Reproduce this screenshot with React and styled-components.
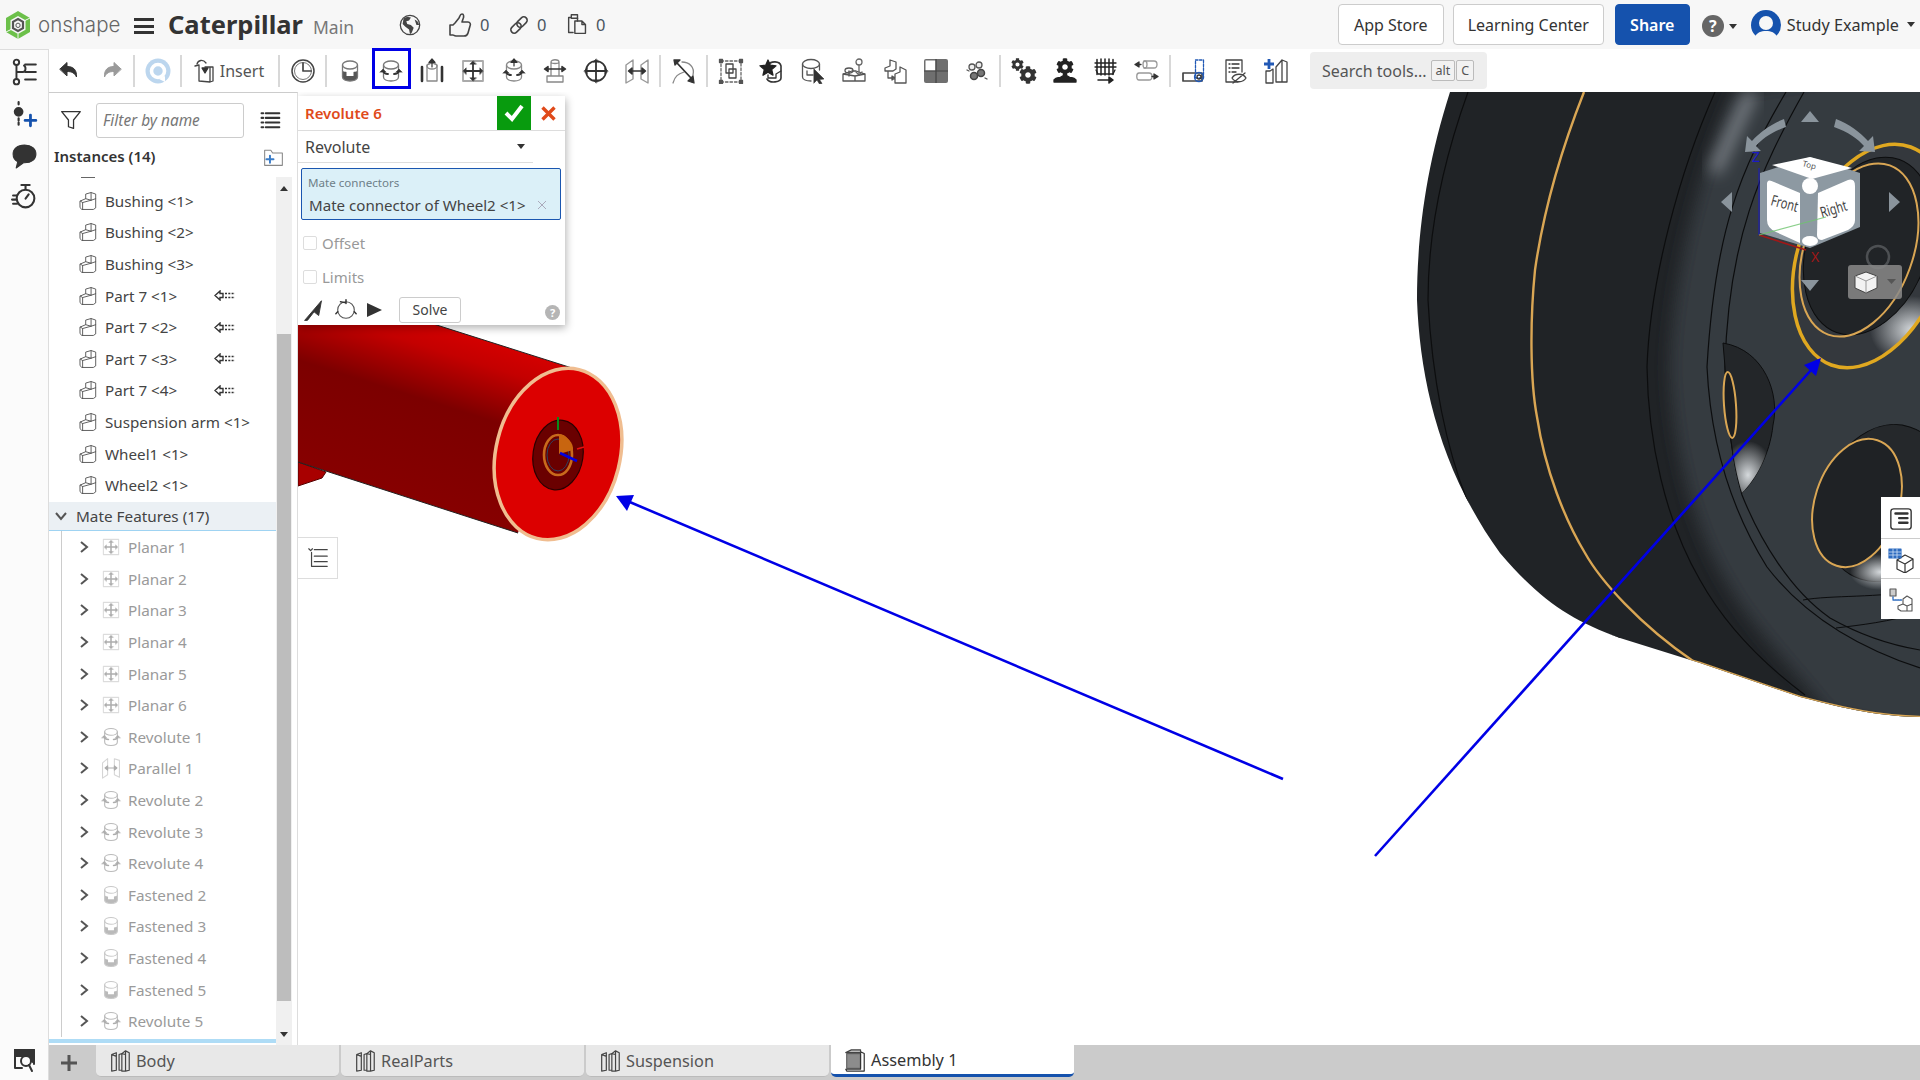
import React from 'react'
import styled, { createGlobalStyle } from 'styled-components'
import { FaCog } from 'react-icons/fa'

const GlobalStyle = createGlobalStyle`
  html, body { margin: 0; padding: 0; height: 100%; overflow: hidden; background: #fff; }
  #root { height: 100%; }
  * { box-sizing: border-box; }
  body { font-family: "Noto Sans", "Liberation Sans", sans-serif; color: #333; }
`

const Page = styled.div`
  width: 1920px;
  height: 1080px;
  display: flex;
  flex-direction: column;
  overflow: hidden;
`
const TopBar = styled.header`
  height: 49px;
  flex: none;
  background: #f7f7f7;
  display: flex;
  align-items: center;
  padding-left: 5px;
`
const Wordmark = styled.span`
  font-family: "Inter", sans-serif;
  font-size: 20.5px;
  font-weight: 300;
  color: #666;
  margin-left: 7px;
  width: 86px;
`
const Burger = styled.span`
  width: 20px;
  height: 16px;
  margin: 3px 14px 0 10px;
  border-top: 3px solid #333;
  border-bottom: 3px solid #333;
  position: relative;
  &::after {
    content: '';
    position: absolute;
    left: 0;
    right: 0;
    top: 3.5px;
    height: 3px;
    background: #333;
  }
`
const DocTitle = styled.span`
  font-size: 25.5px;
  font-weight: 700;
  color: #333;
  margin-top: -2px;
`
const Branch = styled.span`
  font-size: 17.5px;
  color: #777;
  margin: 5px 0 0 10px;
  width: 85px;
`
const Stat = styled.span`
  display: flex;
  align-items: center;
  gap: 7px;
  width: ${(p) => p.$w}px;
  font-size: 16.5px;
  color: #4a5560;
`
const TopRight = styled.div`
  margin-left: auto;
  display: flex;
  align-items: center;
  height: 100%;
`
const TopButton = styled.button`
  height: 41px;
  width: ${(p) => p.$w}px;
  margin-right: ${(p) => p.$mr}px;
  font: 16px "Noto Sans", sans-serif;
  color: ${(p) => (p.$primary ? '#fff' : '#333')};
  background: ${(p) => (p.$primary ? '#1552ad' : '#fff')};
  border: 1px solid ${(p) => (p.$primary ? '#1552ad' : '#ccc')};
  border-radius: 4px;
  font-weight: ${(p) => (p.$primary ? 600 : 400)};
  padding: 0;
`
const Caret = styled.span`
  display: inline-block;
  width: 0;
  height: 0;
  border-left: 4.5px solid transparent;
  border-right: 4.5px solid transparent;
  border-top: 5px solid ${(p) => p.$color || '#333'};
  margin: ${(p) => p.$m || '0'};
`
const HelpDot = styled.span`
  width: 22px;
  height: 22px;
  border-radius: 50%;
  background: #666;
  color: #fff;
  font-size: 16px;
  font-weight: 700;
  display: flex;
  align-items: center;
  justify-content: center;
  margin: 3px 0 0 12px;
`
const HelpGap = styled.span`
  width: 14px;
`
const UserName = styled.span`
  font-size: 16.2px;
  color: #333;
  margin-left: 6px;
`
const Shell = styled.div`
  flex: 1;
  display: flex;
  min-height: 0;
`
const Rail = styled.nav`
  width: 49px;
  flex: none;
  background: #fbfbfb;
  border-top: 1px solid #ddd;
  border-right: 1px solid #ddd;
  display: flex;
  flex-direction: column;
  align-items: center;
  padding-top: 8px;
  gap: 14px;
`
const RailFoot = styled.div`
  margin-top: auto;
  margin-bottom: 7px;
  line-height: 0;
`
const Content = styled.div`
  flex: 1;
  min-width: 0;
  display: flex;
  flex-direction: column;
`
const ToolBar = styled.div`
  height: 43px;
  flex: none;
  display: flex;
  align-items: center;
  background: #fff;
`
const ToolButton = styled.span`
  width: ${(p) => p.$w || 41}px;
  height: 100%;
  flex: none;
  display: flex;
  align-items: center;
  justify-content: center;
  gap: 3px;
  padding-right: ${(p) => p.$pr || 0}px;
  position: relative;
  font-size: 16px;
  color: #555;
  ${(p) =>
    p.$active &&
    `&::after {
      content: '';
      position: absolute;
      left: 2px;
      right: 0;
      top: -1px;
      bottom: 3px;
      border: 3px solid #0000e6;
    }`}
`
const ToolSep = styled.span`
  width: 2px;
  height: 32px;
  margin: 0 2px;
  background: #d8d8d8;
  flex: none;
`
const SearchBox = styled.div`
  width: 177px;
  height: 37px;
  margin-left: 14px;
  border-radius: 4px;
  background: #eee;
  display: flex;
  align-items: center;
  padding-left: 12px;
  font-size: 16px;
  color: #555;
`
const Key = styled.span`
  height: 21px;
  padding: 0 4px;
  margin-left: ${(p) => p.$ml || 0}px;
  border: 1px solid #bbb;
  border-radius: 2px;
  font-size: 12.5px;
  line-height: 19px;
  background: #f2f2f2;
`
const Middle = styled.div`
  flex: 1;
  min-height: 0;
  display: flex;
`
const SidePanel = styled.aside`
  width: 249px;
  flex: none;
  border-top: 1px solid #ccc;
  border-right: 1px solid #ddd;
  display: flex;
  flex-direction: column;
  background: #fff;
`
const FilterRow = styled.div`
  height: 54px;
  flex: none;
  display: flex;
  align-items: center;
  padding-left: 11px;
`
const FilterInput = styled.div`
  width: 148px;
  height: 35px;
  margin: 0 15px 0 14px;
  border: 1px solid #ccc;
  border-radius: 3px;
  font-size: 15.4px;
  font-style: italic;
  color: #777;
  padding-left: 6px;
  line-height: 33px;
`
const InstancesHead = styled.div`
  height: 30px;
  flex: none;
  display: flex;
  align-items: center;
  justify-content: space-between;
  padding: 0 12px 12px 5px;
  font-size: 15px;
  font-weight: 600;
  color: #333;
`
const TreeWrap = styled.div`
  flex: 1;
  min-height: 0;
  display: flex;
  overflow: hidden;
  position: relative;
`
const Tree = styled.div`
  width: 227px;
  flex: none;
  overflow: hidden;
  position: relative;
  padding-top: 8px;
`
const PeekRow = styled.span`
  position: absolute;
  left: 32px;
  top: 0;
  width: 14px;
  height: 1px;
  background: #666;
`
const ScrollTrack = styled.div`
  width: 16px;
  flex: none;
  margin-right: 5px;
  background: #f0f0f0;
  position: relative;
  display: flex;
  flex-direction: column;
  align-items: center;
`
const Thumb = styled.div`
  position: absolute;
  left: 1px;
  right: 1px;
  top: 157px;
  height: 667px;
  background: #bdbdbd;
`
const ArrowUp = styled.span`
  position: absolute;
  top: 9px;
  border-left: 4px solid transparent;
  border-right: 4px solid transparent;
  border-bottom: 5px solid #333;
`
const ArrowDown = styled.span`
  position: absolute;
  bottom: 8px;
  border-left: 4px solid transparent;
  border-right: 4px solid transparent;
  border-top: 5px solid #333;
`
const InstanceRow = styled.div`
  height: 31.6px;
  display: flex;
  align-items: center;
  padding-left: 29px;
  font-size: 15.2px;
  color: #444;
`
const RowLabel = styled.span`
  margin-left: 7px;
  width: ${(p) => p.$w || 'auto'};
`
const GroupHead = styled.div`
  height: 29.5px;
  margin-top: 1px;
  display: flex;
  align-items: center;
  padding-left: 6px;
  background: #ebf0f4;
  border-bottom: 1px solid #9fd3f2;
  font-size: 15.3px;
  color: #444;
  gap: 9px;
`
const FeatureList = styled.div`
  margin-left: 12px;
  border-left: 1px solid #ccc;
`
const FeatureRow = styled.div`
  height: 31.6px;
  display: flex;
  align-items: center;
  padding-left: 16px;
  font-size: 15.3px;
  color: #9a9a9a;
`
const FeatureIconSlot = styled.span`
  margin: 0 6px 0 10px;
  line-height: 0;
`
const TreeEnd = styled.div`
  position: absolute;
  left: 0;
  right: 0;
  bottom: 2px;
  height: 4px;
  background: #aedcf6;
`
const Viewport = styled.main`
  flex: 1;
  min-width: 0;
  position: relative;
  overflow: hidden;
  background: #fff;
`
const Scene = styled.svg`
  position: absolute;
  inset: 0;
  width: 100%;
  height: 100%;
  display: block;
`
const Dialog = styled.section`
  position: absolute;
  left: 0;
  top: 4px;
  width: 267px;
  height: 229px;
  background: #fff;
  box-shadow: 1px 3px 8px rgba(0, 0, 0, 0.3);
`
const DialogHead = styled.div`
  height: 35px;
  display: flex;
  align-items: center;
  border-bottom: 1px solid #ddd;
  padding-left: 7px;
`
const DialogTitle = styled.span`
  flex: 1;
  font-size: 15px;
  font-weight: 600;
  color: #e04a1a;
`
const OkBox = styled.span`
  width: 34px;
  height: 34px;
  background: #089b0e;
  display: flex;
  align-items: center;
  justify-content: center;
`
const CancelBox = styled.span`
  width: 34px;
  display: flex;
  justify-content: center;
`
const SelectRow = styled.div`
  width: 235px;
  height: 32px;
  display: flex;
  align-items: center;
  justify-content: space-between;
  border-bottom: 1px solid #ddd;
  padding: 0 8px 0 7px;
  font-size: 16px;
  color: #444;
`
const QueryBox = styled.div`
  margin: 5px 4px 0 3px;
  height: 52px;
  background: #dbf0f8;
  border: 1px solid #1a56b0;
  border-radius: 2px;
  padding: 6px 6px 0 7px;
`
const QueryLabel = styled.div`
  font-size: 11.6px;
  line-height: 16px;
  color: #6e7f88;
  margin-left: -1px;
`
const QueryValue = styled.div`
  font-size: 15.1px;
  line-height: 22px;
  margin-top: 3px;
  color: #444;
  display: flex;
  justify-content: space-between;
  padding-right: 7px;
`
const CheckRow = styled.div`
  height: 20px;
  margin: ${(p) => p.$mt}px 0 0 5px;
  display: flex;
  align-items: center;
  gap: 5px;
  font-size: 15px;
  color: #999;
`
const CheckBox = styled.span`
  width: 14px;
  height: 14px;
  border: 1px solid #ddd;
  border-radius: 2px;
  background: #fff;
`
const DialogFoot = styled.div`
  display: flex;
  align-items: center;
  margin-top: 10px;
  padding: 0 5px 0 5px;
  height: 25px;
  gap: 7px;
`
const SolveButton = styled.button`
  width: 62px;
  height: 26px;
  margin-left: 9px;
  background: #fff;
  border: 1px solid #ccc;
  border-radius: 3px;
  font: 14px "Noto Sans", sans-serif;
  color: #444;
  padding: 0;
`
const HelpSmall = styled.span`
  margin-left: auto;
  margin-top: 5px;
  width: 15px;
  height: 15px;
  border-radius: 50%;
  background: #b5b5b5;
  color: #fff;
  font-size: 11px;
  font-weight: 700;
  display: flex;
  align-items: center;
  justify-content: center;
`
const TreeToggle = styled.span`
  position: absolute;
  left: 0;
  top: 445px;
  width: 40px;
  height: 42px;
  background: #fff;
  border: 1px solid #ddd;
  border-left: 0;
  display: flex;
  align-items: center;
  justify-content: center;
`
const FlyoutTabs = styled.div`
  position: absolute;
  right: 0;
  top: 405px;
  width: 39px;
  background: #fff;
  display: flex;
  flex-direction: column;
`
const FlyoutTab = styled.span`
  height: 40.5px;
  padding-top: 3px;
  display: flex;
  align-items: center;
  justify-content: center;
  border-top: ${(p) => (p.$first ? 0 : '1px solid #ccc')};
`
const TabBar = styled.div`
  height: 35px;
  flex: none;
  background: #cbcbcb;
  display: flex;
`
const AddTab = styled.span`
  width: 47px;
  padding-right: 7px;
  display: flex;
  align-items: center;
  justify-content: center;
`
const Tab = styled.div`
  width: 243px;
  height: 32px;
  margin-right: 2px;
  padding-left: 12px;
  display: flex;
  align-items: center;
  gap: 4px;
  font-size: 16.3px;
  color: ${(p) => (p.$active ? '#333' : '#555')};
  background: ${(p) => (p.$active ? '#fff' : '#e8e8e8')};
  border-radius: 0 0 5px 5px;
  border-bottom: ${(p) => (p.$active ? '3px solid #1552ad' : '1px solid #bbb')};
`
const IconSvg = styled.svg`
  flex: none;
  display: block;
  fill: none;
  stroke: ${(p) => p.$c || '#444'};
  stroke-width: ${(p) => p.$sw || 1.3};
  stroke-linecap: round;
  stroke-linejoin: round;
  opacity: ${(p) => p.$o || 1};
`

const Icon = ({ s = 26, c, sw, o, children }) => (
  <IconSvg width={s} height={s} viewBox="0 0 26 26" $c={c} $sw={sw} $o={o}>
    {children}
  </IconSvg>
)

const DK = '#333'

// little four-way arrow used by several mate tools
const Cross = ({ x = 13, y = 13, r = 8, h = 2.6 }) => (
  <g stroke={DK} strokeWidth="1.8" fill={DK}>
    <path d={`M${x - r + 2} ${y}H${x + r - 2}M${x} ${y - r + 2}V${y + r - 2}`} />
    <path strokeWidth=".5" d={`M${x - r} ${y}l${h} -${h}v${2 * h}zM${x + r} ${y}l-${h} -${h}v${2 * h}zM${x} ${y - r}l-${h} ${h}h${2 * h}zM${x} ${y + r}l-${h} -${h}h${2 * h}z`} />
  </g>
)
const SideArrows = ({ y = 14 }) => (
  <g stroke={DK} strokeWidth="1.8" fill={DK}>
    <path fill="none" d={`M5 ${y}c1 3 3 3 5 3M21 ${y}c-1 3 -3 3 -5 3`} />
    <path strokeWidth=".5" d={`M2 ${y + 1}l3 -3l3 3zM24 ${y + 1}l-3 -3l-3 3z`} />
  </g>
)
const CylTop = ({ stroke = '#777' }) => (
  <g stroke={stroke}>
    <ellipse cx="13" cy="7" rx="7.5" ry="4" />
    <path d="M5.5 7v12c0 2.5 3.5 4 7.5 4s7.5 -1.5 7.5 -4V7" />
  </g>
)

const Logo = () => (
  <svg width="26" height="30" viewBox="0 0 26 30">
    <path d="M13 1l12 7v14L13 29 1 22V8z" fill="#6cc04a" />
    <path d="M13 6l7.500 4.300v9.400L13 24 5.500 19.700v-9.400z" fill="#f7f7f7" />
    <path d="M25 8l-5 2.500M1 22l5 -2.500M13 29v-5" stroke="#f7f7f7" strokeWidth="1" />
    <path d="M13 9l5 2.900v6.200L13 21l-5 -2.900v-6.200z" fill="none" stroke="#555" strokeWidth="2.200" />
    <path d="M13 13l2 1.200v2.300l-2 1.100-2 -1.100v-2.300z" fill="#f7f7f7" stroke="#555" strokeWidth="1" />
  </svg>
)
const Globe = () => (
  <Icon s={24} sw={1.4} c="#444">
    <circle cx="13" cy="13" r="10.500" />
    <path fill="#444" stroke="none" d="M6 6c3 -2 6 -2 8 -1l-2 3-3 1 1 3 4 1 3 3-2 5-2 2-1 -5-4 -3-3 -3zM18 7l3 2 2 4-3 0-1 -3z" />
  </Icon>
)
const Thumb2 = () => (
  <Icon s={26} sw={1.6} c="#444">
    <path d="M8 11l4 -5c1 -2 1 -4 3 -4s2 3 1 5l-1 3h6c2 0 3 2 2 4l-2 7c-.5 2 -2 3 -4 3H9c-2 0 -2 -1 -3 -1H3v-10h3z" />
  </Icon>
)
const LinkIco = () => (
  <Icon s={22} sw={1.9} c="#444">
    <g transform="rotate(-45 13 13)">
      <rect x="1" y="9" width="14" height="8" rx="4" />
      <rect x="11" y="9" width="14" height="8" rx="4" />
    </g>
  </Icon>
)
const Clip = () => (
  <Icon s={23} sw={1.6} c="#444">
    <path d="M8 22H3V5h3M6 2h7v4H6zM10 9h8l4 4v10H10zM18 9v4h4" />
    <path d="M13 6v3" />
  </Icon>
)
const Avatar = () => (
  <svg width="30" height="30" viewBox="0 0 30 30">
    <circle cx="15" cy="15" r="15" fill="#1552ad" />
    <circle cx="15" cy="13" r="7" fill="#f7f7f7" />
    <path d="M3 28c3 -6 7 -7 12 -7s9 1 12 7c-3 2 -8 2 -12 2s-9 0 -12 -2z" fill="#f7f7f7" />
  </svg>
)
const Part = ({ o, s = 20, c = '#555' }) => (
  <Icon s={s} c={c} sw={1.2} o={o}>
    <path d="M3 13l7 -3V4l7 -2 6 2v18l-3 2H5l-2 -2zM3 13l3 2v9M6 15l11 -3V2M17 12l6 -2M10 10l7 2" />
  </Icon>
)
const Revolute = ({ c = '#555', o }) => (
  <Icon s={22} sw={1.3} o={o}>
    <CylTop stroke={c} />
    <SideArrows y={13} />
  </Icon>
)
const Fastened = ({ o }) => (
  <Icon s={22} o={o}>
    <path d="M5.500 12v7c0 2.500 3.500 4 7.500 4s7.500 -1.500 7.500 -4v-7c0 3 -3 2 -4 3v3h-7v-3c-1 -1 -4 0 -4 -3z" fill="#555" stroke="none" />
    <CylTop />
  </Icon>
)
const Planar = ({ o }) => (
  <Icon s={22} o={o}>
    <rect x="4" y="4" width="18" height="18" stroke="#aaa" />
    <Cross />
  </Icon>
)
const Parallel = ({ o }) => (
  <Icon s={22} o={o}>
    <path d="M3 7l6 -5v19l-6 4zM23 4l-6 -2v19l6 3z" stroke="#999" />
    <path d="M7 13h12M9 10.500l-3 2.500 3 2.500zM17 10.500l3 2.500-3 2.500z" fill={DK} stroke={DK} />
  </Icon>
)
const PartTag = () => (
  <svg width="22" height="11" viewBox="0 0 22 11" fill="none" stroke="#333" strokeWidth="1.4">
    <path d="M6 1L1 5.500 6 10V7.500H9V3.500H6z" />
    <path strokeDasharray="2 1.300" d="M11 3.500h10M11 7.500h10" />
  </svg>
)
const DocIcon = () => (
  <Icon s={24} sw={1.3} c="#444">
    <path d="M4 6l5 -2v19l-5 1zM4 6l5 2M12 6l3 -1v18h-3zM15 5l4 -3 4 2v19l-4 1h-4M19 2v22M15 5l4 1" />
  </Icon>
)
const AssemblyIcon = () => (
  <Icon s={24} sw={1.3} c="#333">
    <path d="M4 6h15v16H4z" fill="#8c8c8c" stroke="#666" />
    <path d="M19 4l4 2v19l-19 0-1 -2h16V6z" />
    <path d="M3 5l6 -3h10v3z" stroke="#444" fill="#bbb" />
  </Icon>
)

const tools = {
  undo: (
    <Icon sw={1}>
      <path fill="#333" stroke="#333" d="M3 11l7 -6.500v4c6 0 10 3 9.500 10.500-2 -4 -4.500 -5.500 -9.500 -5.500v4z" />
    </Icon>
  ),
  redo: (
    <Icon sw={1}>
      <path fill="#9a9a9a" stroke="#9a9a9a" d="M23 11l-7 -6.500v4c-6 0 -10 3 -9.500 10.500 2 -4 4.500 -5.500 9.500 -5.500v4z" />
    </Icon>
  ),
  ring: (
    <svg width="26" height="26" viewBox="0 0 26 26">
      <circle cx="13" cy="13" r="12.500" fill="#bcd6ee" />
      <circle cx="13" cy="13" r="6.500" fill="none" stroke="#fff" strokeWidth="3.600" />
      <path d="M14 21l6 -3v6z" fill="#fff" />
    </svg>
  ),
  clock: (
    <Icon sw={1.5}>
      <circle cx="13" cy="13" r="11" />
      <circle cx="13" cy="13" r="8.500" stroke="#777" strokeWidth="1" />
      <path d="M13 5v8h8" strokeWidth="1.700" />
    </Icon>
  ),
  fastened: (
    <Icon>
      <path d="M5.500 11v8c0 2.500 3.500 4 7.500 4s7.500 -1.500 7.500 -4v-8c0 4 -3 2 -4 3v4h-7v-4c-1 -1 -4 1 -4 -3z" fill="#555" stroke="none" />
      <CylTop />
    </Icon>
  ),
  revolute: (
    <Icon>
      <CylTop />
      <SideArrows y={13} />
    </Icon>
  ),
  slider: (
    <Icon>
      <path d="M8 7l5 -2 5 2v16H8z" stroke="#888" />
      <ellipse cx="13" cy="8" rx="5" ry="3" stroke="#888" />
      <path d="M3 9v14M23 9v14" stroke={DK} strokeWidth="2.600" />
      <path d="M13 9V3M10 4.500l3 -3.500 3 3.500z" stroke={DK} fill={DK} strokeWidth="1.200" />
    </Icon>
  ),
  planar: (
    <Icon>
      <rect x="3" y="3" width="20" height="20" stroke="#aaa" strokeWidth="1.800" />
      <Cross r={10} h={3.2} />
    </Icon>
  ),
  cylindrical: (
    <Icon>
      <CylTop stroke="#888" />
      <SideArrows y={14} />
      <path d="M13 8V3M10 4.500l3 -3.500 3 3.500z" stroke={DK} fill={DK} strokeWidth="1.200" />
    </Icon>
  ),
  pin: (
    <Icon>
      <path d="M9 4c0 -3 8 -3 8 0v14H9zM9 4c0 2 8 2 8 0M9 18H5v6h16v-6h-4" stroke="#888" />
      <path d="M3 11h20M6 8.500l-3.500 2.500 3.500 2.500zM20 8.500l3.500 2.500-3.500 2.500z" stroke={DK} fill={DK} strokeWidth="1.500" />
    </Icon>
  ),
  ball: (
    <Icon>
      <circle cx="13" cy="13" r="10" stroke={DK} strokeWidth="1.700" />
      <Cross r={12} h={3.2} />
    </Icon>
  ),
  parallel: (
    <Icon>
      <path d="M2 7l7 -5v19l-7 4zM24 2l-7 5v14l7 4z" stroke="#999" strokeWidth="1.400" />
      <path d="M5 13h16M8 10l-3.500 3 3.500 3zM18 10l3.500 3-3.500 3z" stroke={DK} fill={DK} strokeWidth="1.500" />
    </Icon>
  ),
  relate: (
    <Icon>
      <path d="M2 25c2 -7 5 -9 11 -11M11 4c7 0 13 5 11 13" stroke="#888" />
      <path d="M6 5l14 15" stroke={DK} strokeWidth="1.800" />
      <path d="M3 2h6l-5 5zM23 25l-1 -7-5 5z" fill={DK} stroke={DK} />
    </Icon>
  ),
  group: (
    <Icon>
      <rect x="3" y="3" width="20" height="21" stroke="#666" strokeDasharray="2.500 2" />
      <path d="M8 6h7v9H8zM11 11h7v9h-7z" stroke="#444" />
      <path d="M1.500 1.500h3v3h-3zM21.500 1.500h3v3h-3zM1.500 22.500h3v3h-3zM21.500 22.500h3v3h-3z" fill="#555" stroke="#555" />
    </Icon>
  ),
  star: (
    <Icon>
      <path d="M8 8c4 -6 13 -5 14 0v12c0 4 -11 6 -14 1" stroke={DK} strokeWidth="1.600" />
      <path d="M9 17v3h8v-4l5 -3" stroke={DK} />
      <path d="M9 2l2.300 5.200 5.700 .6-4.300 3.800 1.300 5.600-5 -3-5 3 1.300 -5.600L1 7.800l5.700 -.6z" fill="#222" stroke="#222" />
    </Icon>
  ),
  pick: (
    <Icon>
      <ellipse cx="11" cy="6" rx="8.500" ry="4.500" stroke="#555" />
      <path d="M2.500 6v13c0 2.500 4 4 8.500 4M19.500 6v6M7 13v4h6" stroke="#555" />
      <path d="M14 11l10 10-4.500 .5 2.500 4-2.500 .5-2.500 -4-3 3z" fill="#333" stroke="#333" strokeWidth=".6" />
    </Icon>
  ),
  insertPart: (
    <Icon>
      <path d="M2 16l9 -3h4l9 3v7H2zM2 16l12 2 10 -2M14 18v5" stroke="#555" />
      <ellipse cx="8" cy="12.500" rx="4" ry="2.500" stroke="#555" />
      <path d="M8 13v5" stroke="#555" />
      <ellipse cx="18" cy="4" rx="3" ry="3" stroke="#666" />
      <path d="M18 7v8M15 14l3 3 3 -3" stroke="#666" />
    </Icon>
  ),
  replace: (
    <Icon>
      <path d="M3 10l5 -2V2l6 2v7l-3 2H3zM13 16l5 -2v-5l6 3v13H13zM6 14v6h5M13 20l-3 -2v4z" stroke="#555" />
    </Icon>
  ),
  pattern: (
    <svg width="26" height="26" viewBox="0 0 26 26">
      <rect x="1" y="1" width="24" height="24" rx="2" fill="#6f6f6f" />
      <rect x="2.500" y="2.500" width="10" height="10" fill="#fff" />
      <path d="M13 1v24M1 13h24" stroke="#444" strokeWidth="1.200" />
    </svg>
  ),
  gears: (
    <Icon>
      <circle cx="8" cy="9" r="3" fill="#eee" stroke="#555" />
      <circle cx="15" cy="7" r="3" fill="#eee" stroke="#555" />
      <circle cx="17" cy="15" r="3.500" fill="#777" stroke="#444" strokeWidth="1.500" />
      <circle cx="10" cy="18" r="3.500" fill="#777" stroke="#444" strokeWidth="1.500" />
      <path d="M3 12l2 1M21 20l2 1" stroke="#555" />
    </Icon>
  ),
  gear2: (
    <Icon>
      <FaCog x="0" y="0" size={13} color="#333" />
      <FaCog x="8" y="8" size={18} color="#333" />
    </Icon>
  ),
  rack: (
    <Icon>
      <FaCog x="4" y="0" size={18} color="#222" />
      <path d="M2 22c3 -4 5 -1 7 -3 2 -2 6 -2 8 0s4 -1 7 3v2H2z" fill="#222" stroke="#222" />
    </Icon>
  ),
  screw: (
    <Icon>
      <path d="M4 1.500v15M8 1v16M12 1v16M16 1v16M20 1.500v15" strokeWidth="1.500" stroke="#222" />
      <path d="M2 5h21M2 9h21M3 12l2 4h15l2 -4" strokeWidth="1.300" stroke="#222" />
      <path d="M5 22h13M16 19l4 3-4 3z" stroke="#222" fill="#222" strokeWidth="1.500" />
    </Icon>
  ),
  linear: (
    <Icon>
      <path d="M10 3h10c4 0 4 7 0 7H10" stroke="#999" />
      <ellipse cx="11" cy="6.500" rx="2" ry="3.500" stroke="#999" />
      <path d="M7 6.500h-6M5 4l-4 2.500 4 2.500z" stroke={DK} fill={DK} />
      <path d="M5 15h10c4 0 4 7 0 7H5c-3 0 -3 -7 0 -7z" stroke="#999" />
      <path d="M18 18.500h6M20 16l4 2.500-4 2.500z" stroke={DK} fill={DK} />
    </Icon>
  ),
  connector: (
    <Icon>
      <rect x="2" y="15" width="19" height="8" stroke="#444" strokeWidth="1.700" />
      <rect x="14.500" y="2" width="8" height="18" stroke="#2259b5" strokeDasharray="2.500 1.500" />
      <circle cx="18" cy="19" r="2" stroke="#333" />
      <circle cx="18" cy="19" r="4.500" stroke="#2259b5" />
    </Icon>
  ),
  hide: (
    <Icon>
      <path d="M16 24H4V2h16v12" stroke="#444" />
      <path d="M7 6h1M10 6h7M7 10h1M10 10h7M7 14h1M10 14h4" stroke="#333" />
      <path d="M10 20c3 -5 11 -5 14 0-3 5 -11 5 -14 0zM11 25l12 -10" stroke="#444" />
    </Icon>
  ),
  insertMany: (
    <Icon>
      <path d="M3 13h4l3 -2v14H3zM13 9l6 -7 5 2v20H13zM19 2v22" stroke="#444" />
      <path d="M6 1v10M1 6h10" stroke="#2259b5" strokeWidth="2.800" strokeLinecap="butt" />
    </Icon>
  ),
  insert: (
    <Icon>
      <path d="M4 8l4 -1v16l11 1 3 -1V9h-8M19 24V9" stroke="#444" />
      <path d="M6 6c1 -4 6 -5 9 -1" stroke="#444" />
      <path d="M11 10h6l-3 5z" fill="#333" stroke="#333" />
    </Icon>
  )
}

const group1 = ['revolute', 'slider', 'planar', 'cylindrical', 'pin', 'ball', 'parallel']
const group2 = ['group', 'star', 'pick', 'insertPart', 'replace', 'pattern', 'gears']
const group3 = ['gear2', 'rack', 'screw', 'linear']
const group4 = ['connector', 'hide', 'insertMany']

const instances = [
  { name: 'Bushing <1>' },
  { name: 'Bushing <2>' },
  { name: 'Bushing <3>' },
  { name: 'Part 7 <1>', tag: true },
  { name: 'Part 7 <2>', tag: true },
  { name: 'Part 7 <3>', tag: true },
  { name: 'Part 7 <4>', tag: true },
  { name: 'Suspension arm <1>' },
  { name: 'Wheel1 <1>' },
  { name: 'Wheel2 <1>' }
]

const features = [
  ['Planar 1', Planar],
  ['Planar 2', Planar],
  ['Planar 3', Planar],
  ['Planar 4', Planar],
  ['Planar 5', Planar],
  ['Planar 6', Planar],
  ['Revolute 1', Revolute],
  ['Parallel 1', Parallel],
  ['Revolute 2', Revolute],
  ['Revolute 3', Revolute],
  ['Revolute 4', Revolute],
  ['Fastened 2', Fastened],
  ['Fastened 3', Fastened],
  ['Fastened 4', Fastened],
  ['Fastened 5', Fastened],
  ['Revolute 5', Revolute]
]

const Chevron = ({ down }) => (
  <svg width="12" height="12" viewBox="0 0 12 12" fill="none" stroke="#555" strokeWidth="2">
    <path d={down ? 'M1 3l5 6 5 -6' : 'M3 1l6 5-6 5'} />
  </svg>
)

const WHEEL =
  'M1450 92C1425 170 1417 240 1417 300C1420 380 1440 470 1500 553C1540 600 1570 620 1620 638L1700 663L1800 697C1850 710 1880 716 1920 717L1920 92Z'
const RECESS_MID = 'M1723 343C1765 350 1780 395 1773 425C1770 455 1755 480 1742 493C1735 470 1727 430 1725 367Z'

const CadScene = () => (
  <Scene viewBox="298 92 1622 953" preserveAspectRatio="none">
    <defs>
      <linearGradient id="redBody" gradientUnits="userSpaceOnUse" x1="480" y1="325" x2="425" y2="500">
        <stop offset="0" stopColor="#dc0000" />
        <stop offset=".2" stopColor="#c40000" />
        <stop offset=".48" stopColor="#7c0000" />
        <stop offset="1" stopColor="#860000" />
      </linearGradient>
      <radialGradient id="shine">
        <stop offset="0" stopColor="#d5d9dc" />
        <stop offset="1" stopColor="#d5d9dc" stopOpacity="0" />
      </radialGradient>
      <clipPath id="wheelClip">
        <path d={WHEEL} />
      </clipPath>
      <clipPath id="recess1">
        <ellipse cx="1871" cy="256" rx="72" ry="116" transform="rotate(20 1871 256)" />
      </clipPath>
      <clipPath id="recess2">
        <path d={RECESS_MID} />
      </clipPath>
      <filter id="soft" x="-30%" y="-30%" width="160%" height="160%">
        <feGaussianBlur stdDeviation="8" />
      </filter>
    </defs>

    {/* red cylinder */}
    <path d="M298 462L298 486L322 478L326 472Z" fill="#a80000" stroke="#500" />
    <path d="M298 281L572 368L518 533L298 462Z" fill="url(#redBody)" />
    <path d="M298 281L572 368" stroke="#222" strokeWidth="1" />
    <path d="M298 462L518 533" stroke="#222" strokeWidth="1" />
    <ellipse cx="558" cy="454" rx="62" ry="87" transform="rotate(14 558 454)" fill="#dc0000" stroke="#f0bd90" strokeWidth="3.500" />
    <ellipse cx="558" cy="455" rx="25" ry="35" transform="rotate(8 558 455)" fill="#6a0000" stroke="#2a0000" strokeWidth="1.200" />
    <ellipse cx="558" cy="455" rx="14" ry="20" fill="none" stroke="#c86a1c" strokeWidth="2.600" />
    <ellipse cx="558" cy="455" rx="11" ry="16" fill="none" stroke="#2e4060" strokeWidth="1" />
    <path d="M559 454V434C567 435 574 444 573 450Z" fill="#c8650f" />
    <path d="M558 417V430" stroke="#0a8a1a" strokeWidth="2" />
    <path d="M560 453L577 461" stroke="#0000e0" strokeWidth="2.600" />
    <path d="M577 449L584 447" stroke="#e81010" strokeWidth="1.500" />

    {/* wheel */}
    <path d={WHEEL} fill="#202326" />
    <g clipPath="url(#wheelClip)">
      <path
        d="M1735 92C1700 170 1672 280 1670 367C1672 440 1690 520 1725 580C1750 625 1790 665 1830 715L1960 740V60Z"
        fill="#363a3f"
        filter="url(#soft)"
      />
      <path d="M1752 92C1738 120 1725 150 1714 172" stroke="#8c9298" strokeWidth="10" fill="none" filter="url(#soft)" />
      <path d="M1468 92C1440 170 1428 240 1428 300C1432 380 1447 450 1467 500C1485 550 1505 580 1533 600C1560 620 1590 630 1620 638" stroke="#0c0d0e" strokeWidth="1.200" fill="none" />
      <path d="M1715 92C1680 170 1650 280 1647 367C1648 440 1665 520 1700 580C1725 625 1765 665 1805 695" stroke="#0c0d0e" strokeWidth="1.200" fill="none" />
      <path d="M1786 92C1740 170 1715 230 1707 367C1710 430 1725 500 1767 567C1800 610 1850 645 1920 668" stroke="#0c0d0e" strokeWidth="1.200" fill="none" />
      <path d="M1804 92C1760 170 1728 240 1725 367C1727 430 1735 470 1742 495C1760 540 1790 590 1830 618C1860 635 1890 645 1920 650" stroke="#0c0d0e" strokeWidth="1.200" fill="none" />
      <path d={RECESS_MID} fill="#232629" stroke="#0c0d0e" />
      <g clipPath="url(#recess2)">
        <ellipse cx="1748" cy="475" rx="26" ry="34" fill="url(#shine)" />
      </g>
      <ellipse cx="1730" cy="405" rx="6" ry="33" transform="rotate(-4 1730 405)" fill="#1c1e21" stroke="#d9a654" strokeWidth="2" />
      <path d="M1584 92C1565 140 1545 200 1535 270C1530 320 1530 380 1537 417C1545 470 1565 520 1585 553C1600 580 1640 625 1693 661L1700 663L1800 697C1850 710 1880 716 1920 717" stroke="#d9a654" strokeWidth="2.400" fill="none" />
      <path d="M1803 600C1830 595 1880 598 1920 590M1836 628C1860 625 1890 622 1920 612" stroke="#0c0d0e" fill="none" />
      {/* lower hole */}
      <ellipse cx="1885" cy="503" rx="62" ry="80" transform="rotate(18 1885 503)" fill="#25282b" stroke="#0c0d0e" />
      <ellipse cx="1880" cy="572" rx="30" ry="18" fill="url(#shine)" />
      <ellipse cx="1857" cy="503" rx="42" ry="66" transform="rotate(18 1857 503)" fill="#1f2225" stroke="#d9a654" strokeWidth="2" />
      {/* upper hole */}
      <ellipse cx="1871" cy="256" rx="72" ry="116" transform="rotate(20 1871 256)" fill="#34383d" />
      <g clipPath="url(#recess1)">
        <ellipse cx="1912" cy="330" rx="42" ry="34" fill="url(#shine)" />
        <ellipse cx="1868" cy="246" rx="60" ry="92" transform="rotate(20 1868 246)" fill="#212427" stroke="#0c0d0e" />
      </g>
      <ellipse cx="1859" cy="250" rx="54" ry="90" transform="rotate(20 1859 250)" fill="none" stroke="#d9a654" strokeWidth="2" />
      <ellipse cx="1871" cy="256" rx="72" ry="116" transform="rotate(20 1871 256)" fill="none" stroke="#e0a820" strokeWidth="3.500" />
    </g>

    {/* orientation cube */}
    <g fill="#8a949c">
      <path d="M1810 111L1819 122H1801ZM1810 291L1819 280H1801ZM1721 202L1732 192V212ZM1900 202L1889 192V212Z" />
      <path d="M1784 119L1786 127C1772 132 1762 139 1756 146L1761 151L1745 152L1747 136L1752 141C1760 132 1771 124 1784 119Z" />
      <path d="M1836 119L1834 127C1848 132 1858 139 1864 146L1859 151L1875 152L1873 136L1868 141C1860 132 1849 124 1836 119Z" />
    </g>
    <path d="M1810 157L1860 173V227L1810 248L1760 233V173Z" fill="#8d99a2" />
    <path d="M1772 165L1810 157L1852 168L1812 179Z" fill="#fff" />
    <path d="M1767 184Q1767 178 1774 182L1800 193V243L1776 232Q1767 228 1767 220Z" fill="#fff" />
    <path d="M1818 193L1848 180Q1855 178 1855 186V220Q1855 226 1848 230L1822 240Q1817 240 1817 235Z" fill="#fff" />
    <circle cx="1810" cy="186" r="8" fill="#fff" />
    <ellipse cx="1810" cy="241" rx="8" ry="5" fill="#fff" />
    <text x="0" y="0" fontSize="13" fill="#444" fontFamily="Noto Sans, sans-serif" transform="translate(1770 205) rotate(15) scale(.85 1.15)">Front</text>
    <text x="0" y="0" fontSize="13" fill="#444" fontFamily="Noto Sans, sans-serif" transform="translate(1822 218) rotate(-17) scale(.85 1.15)">Right</text>
    <text x="0" y="0" fontSize="8" fill="#555" fontFamily="Noto Sans, sans-serif" transform="translate(1802 166) rotate(15)">Top</text>
    <path d="M1759 168V235" stroke="#1a1ac8" strokeWidth="1" />
    <path d="M1759 235L1806 250" stroke="#a01818" strokeWidth="1.600" />
    <path d="M1759 235L1826 217" stroke="#6fc46f" strokeWidth="1.200" opacity=".8" />
    <text x="1752" y="162" fontSize="14" fill="#1a1ac8" fontFamily="Noto Sans, sans-serif">Z</text>
    <text x="1811" y="262" fontSize="14" fill="#a01818" fontFamily="Noto Sans, sans-serif">X</text>
    <circle cx="1878" cy="257" r="11" fill="none" stroke="#6a6e72" strokeWidth="2.500" opacity=".6" />
    <rect x="1848" y="265" width="54" height="34" rx="3" fill="#8a8a8a" opacity=".85" />
    <path d="M1866 272L1877 276V288L1866 293L1855 288V276Z" fill="#f2f2f2" stroke="#444" />
    <path d="M1855 276L1866 281L1877 276M1866 281V293" fill="none" stroke="#999" />
    <path d="M1887 279H1896L1891.500 284Z" fill="#555" />

    {/* callout arrows */}
    <path d="M1283 779L625 500" stroke="#0000e6" strokeWidth="2.600" />
    <path d="M616 496L634 495L627 511Z" fill="#0000e6" />
    <path d="M1375 856L1812 369" stroke="#0000e6" strokeWidth="2.600" />
    <path d="M1821 358L1816 376L1804 365Z" fill="#0000e6" />
  </Scene>
)

const App = () => (
  <Page>
    <GlobalStyle />
    <TopBar>
      <Logo />
      <Wordmark>onshape</Wordmark>
      <Burger />
      <DocTitle>Caterpillar</DocTitle>
      <Branch>Main</Branch>
      <Stat $w={49}><Globe /></Stat>
      <Stat $w={61}><Thumb2 />0</Stat>
      <Stat $w={58}><LinkIco />0</Stat>
      <Stat $w={40}><Clip />0</Stat>
      <TopRight>
        <TopButton $w={106} $mr={9}>App Store</TopButton>
        <TopButton $w={151} $mr={11}>Learning Center</TopButton>
        <TopButton $w={75} $mr={0} $primary>Share</TopButton>
        <HelpDot>?</HelpDot>
        <Caret $m="3px 0 0 5px" />
        <HelpGap />
        <Avatar />
        <UserName>Study Example</UserName>
        <Caret $m="0 5px 0 8px" />
      </TopRight>
    </TopBar>
    <Shell>
      <Rail>
        <Icon s={28} sw={1.800} c="#333">
          <circle cx="6" cy="4" r="2.500" />
          <circle cx="6" cy="22" r="2.500" />
          <path d="M6 7v12M6 13h6c3 0 3 -5 1 -6M14 6h10M14 13h10M14 20h10" />
        </Icon>
        <Icon s={28} sw={2} c="#333">
          <circle cx="8" cy="11" r="3.500" fill="#333" />
          <path d="M8 2v4M8 17v7" strokeDasharray="2 2" />
          <path d="M14 19h10M19 14v10" stroke="#1552ad" strokeWidth="2.600" />
        </Icon>
        <Icon s={27} sw={1}>
          <path fill="#333" stroke="#333" d="M13 3c7 0 11 3.500 11 8.500S20 20 13 20h-1l-7 5 1.500 -6C3.500 17.500 2 15 2 11.500 2 6.500 6 3 13 3z" />
        </Icon>
        <Icon s={27} sw={2} c="#333">
          <circle cx="14" cy="15" r="8.500" />
          <path d="M14 15l3 -4M10 2h8M14 2v4M2 12h4M1 16h4M2 20h4" />
        </Icon>
        <RailFoot>
          <Icon s={26} sw={2} c="#333">
            <path d="M4 3h19v14" fill="#333" />
            <path d="M4 3v18h7" />
            <rect x="4" y="3" width="19" height="6" fill="#333" stroke="#333" />
            <circle cx="15" cy="14" r="5" fill="#fbfbfb" />
            <path d="M18 18l3 6" />
          </Icon>
        </RailFoot>
      </Rail>
      <Content>
        <ToolBar>
          <ToolButton>{tools.undo}</ToolButton>
          <ToolButton>{tools.redo}</ToolButton>
          <ToolSep />
          <ToolButton>{tools.ring}</ToolButton>
          <ToolSep />
          <ToolButton $w={92} $pr={5}>{tools.insert}Insert</ToolButton>
          <ToolSep />
          <ToolButton>{tools.clock}</ToolButton>
          <ToolSep />
          <ToolButton>{tools.fastened}</ToolButton>
          {group1.map((k) => (
            <ToolButton key={k} $active={k === 'revolute'}>{tools[k]}</ToolButton>
          ))}
          <ToolSep />
          <ToolButton>{tools.relate}</ToolButton>
          <ToolSep />
          {group2.map((k) => (
            <ToolButton key={k}>{tools[k]}</ToolButton>
          ))}
          <ToolSep />
          {group3.map((k) => (
            <ToolButton key={k}>{tools[k]}</ToolButton>
          ))}
          <ToolSep />
          {group4.map((k) => (
            <ToolButton key={k}>{tools[k]}</ToolButton>
          ))}
          <SearchBox>
            Search tools...
            <Key $ml={4}>alt</Key>
            <Key $ml={1}>C</Key>
          </SearchBox>
        </ToolBar>
        <Middle>
          <SidePanel>
            <FilterRow>
              <Icon s={22} sw={1.500} c="#333">
                <path d="M2 3h22l-8 10v10l-6 -2V13z" />
              </Icon>
              <FilterInput>Filter by name</FilterInput>
              <Icon s={22} sw={2.400} c="#333">
                <path d="M3 5h2M8 5h16M3 10.500h2M8 10.500h16M3 16h2M8 16h16M3 21.500h2M8 21.500h16" />
              </Icon>
            </FilterRow>
            <InstancesHead>
              Instances (14)
              <Icon s={23} sw={1.200} c="#888">
                <path d="M3 6h7l2 3h11v14H3z" />
                <path d="M9 12v8M5 16h8" stroke="#3a7cc8" strokeWidth="2.200" />
              </Icon>
            </InstancesHead>
            <TreeWrap>
              <Tree>
                <PeekRow />
                {instances.map((it) => (
                  <InstanceRow key={it.name}>
                    <Part />
                    <RowLabel $w={it.tag ? '109px' : 'auto'}>{it.name}</RowLabel>
                    {it.tag && <PartTag />}
                  </InstanceRow>
                ))}
                <GroupHead>
                  <Chevron down />
                  Mate Features (17)
                </GroupHead>
                <FeatureList>
                  {features.map(([name, Ico]) => (
                    <FeatureRow key={name}>
                      <Chevron />
                      <FeatureIconSlot><Ico o={0.4} /></FeatureIconSlot>
                      {name}
                    </FeatureRow>
                  ))}
                </FeatureList>
                <TreeEnd />
              </Tree>
              <ScrollTrack>
                <ArrowUp />
                <Thumb />
                <ArrowDown />
              </ScrollTrack>
            </TreeWrap>
          </SidePanel>
          <Viewport>
            <CadScene />
            <Dialog>
              <DialogHead>
                <DialogTitle>Revolute 6</DialogTitle>
                <OkBox>
                  <svg width="20" height="18" viewBox="0 0 20 18" fill="none" stroke="#fff" strokeWidth="4">
                    <path d="M2 9l6 6L18 2" />
                  </svg>
                </OkBox>
                <CancelBox>
                  <svg width="15" height="15" viewBox="0 0 15 15" fill="none" stroke="#e04a1a" strokeWidth="3.400">
                    <path d="M1.500 1.500l12 12M13.500 1.500l-12 12" />
                  </svg>
                </CancelBox>
              </DialogHead>
              <SelectRow>
                Revolute
                <Caret $color="#333" />
              </SelectRow>
              <QueryBox>
                <QueryLabel>Mate connectors</QueryLabel>
                <QueryValue>
                  Mate connector of Wheel2 &lt;1&gt;
                  <svg width="10" height="22" viewBox="0 0 10 22" fill="none" stroke="#aab" strokeWidth="1">
                    <path d="M1 7l8 8M9 7l-8 8" />
                  </svg>
                </QueryValue>
              </QueryBox>
              <CheckRow $mt={13}><CheckBox />Offset</CheckRow>
              <CheckRow $mt={14}><CheckBox />Limits</CheckRow>
              <DialogFoot>
                <Icon s={24} sw={1}>
                  <path d="M2 24L20 3l-3 16-5 -4-7 9z" fill="#333" stroke="#333" />
                </Icon>
                <Icon s={24} sw={1.200} c="#555">
                  <circle cx="13" cy="13" r="9" />
                  <path d="M7 4l5 1M13 2v4M4 15l-2 2M22 15l2 2" stroke="#333" strokeWidth="1.600" />
                </Icon>
                <svg width="18" height="18" viewBox="0 0 18 18">
                  <path d="M2 2l15 7-15 7z" fill="#333" />
                </svg>
                <SolveButton>Solve</SolveButton>
                <HelpSmall>?</HelpSmall>
              </DialogFoot>
            </Dialog>
            <TreeToggle>
              <Icon s={24} sw={1.300} c="#444">
                <path d="M3 3l2 2 2 -2M6 7v15M9 4h14M9 11h14M9 17h14M6 22h17" />
              </Icon>
            </TreeToggle>
            <FlyoutTabs>
              <FlyoutTab $first>
                <Icon s={24} sw={1.500} c="#333">
                  <rect x="2" y="2" width="22" height="22" rx="3" />
                  <path d="M7 7h13M11 12h9M11 17h9" strokeWidth="2.600" />
                </Icon>
              </FlyoutTab>
              <FlyoutTab>
                <Icon s={26} sw={1.200} c="#333">
                  <path d="M9 13l8 -5 8 4v9l-8 5-8 -4zM9 13l8 4 8 -5M17 17v9" />
                  <rect x="1" y="2" width="12" height="9" fill="#2e6cc0" stroke="#2e6cc0" />
                  <path d="M1 5h12M1 8h12M5 2v9M9 2v9" stroke="#cfe0f5" strokeWidth=".8" />
                </Icon>
              </FlyoutTab>
              <FlyoutTab>
                <Icon s={26} sw={1.100} c="#555">
                  <rect x="2" y="2" width="6" height="7" fill="#ccc" />
                  <path d="M5 10v3h9" stroke="#2e6cc0" strokeDasharray="1.500 1" strokeWidth="1.400" />
                  <path d="M10 19l5 -2v-5l4 -3 5 3v12H13l-3 -2zM15 17l4 2v5M19 19l5 -2" />
                </Icon>
              </FlyoutTab>
            </FlyoutTabs>
          </Viewport>
        </Middle>
        <TabBar>
          <AddTab>
            <svg width="18" height="18" viewBox="0 0 18 18" stroke="#555" strokeWidth="3">
              <path d="M9 1v16M1 9h16" />
            </svg>
          </AddTab>
          <Tab><DocIcon />Body</Tab>
          <Tab><DocIcon />RealParts</Tab>
          <Tab><DocIcon />Suspension</Tab>
          <Tab $active><AssemblyIcon />Assembly 1</Tab>
        </TabBar>
      </Content>
    </Shell>
  </Page>
)

export default App
